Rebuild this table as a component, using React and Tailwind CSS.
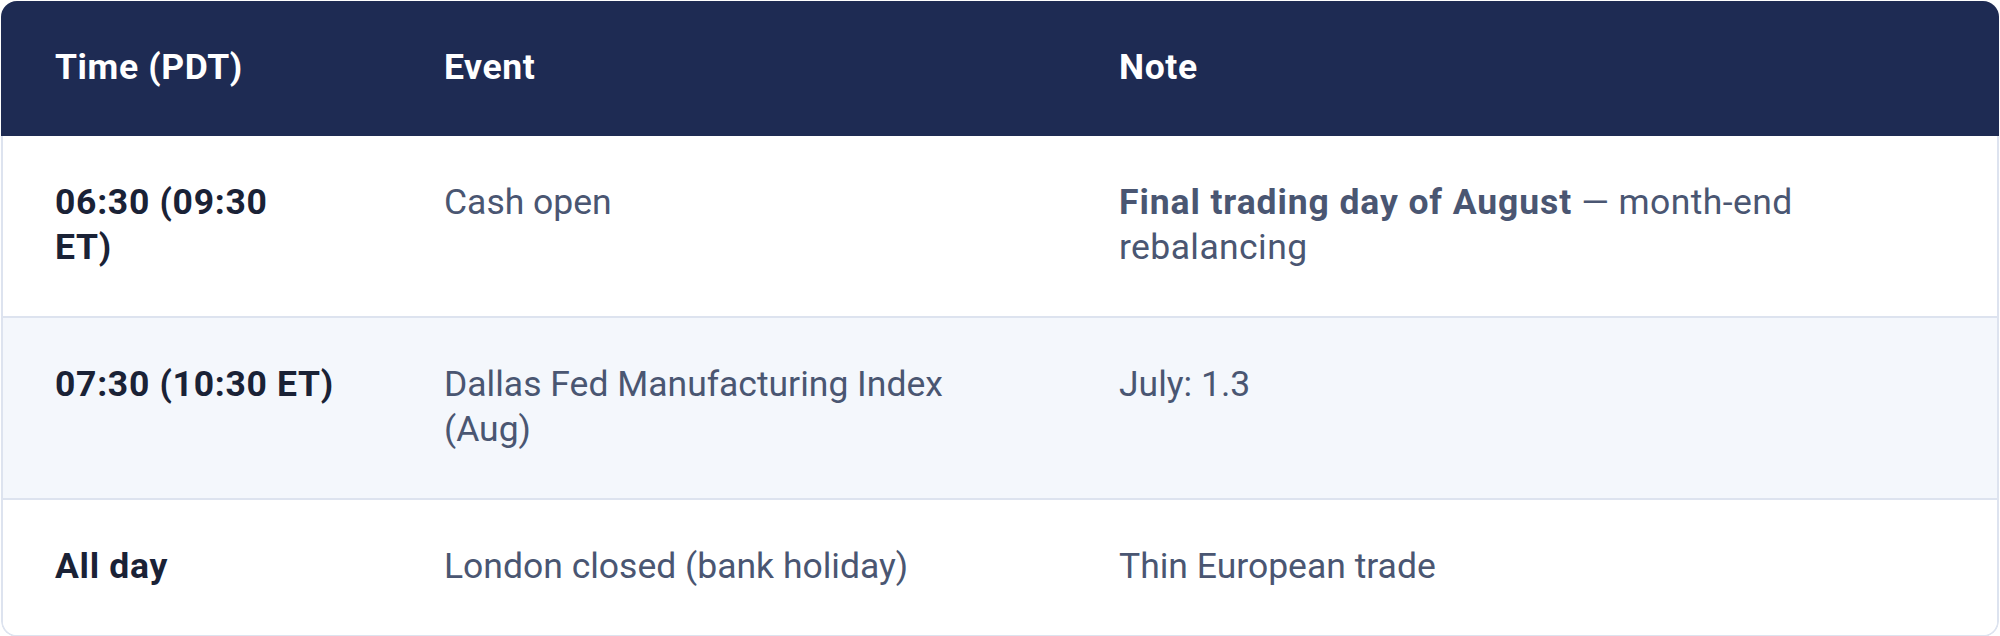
import React from "react";

const rows = [
  {
    time: ["06:30 (09:30", "ET)"],
    event: "Cash open",
    note: (
      <>
        <span className="font-bold tracking-[0.9px]">Final trading day of August</span>
        <span className="tracking-[0.4px]"> — month-end rebalancing</span>
      </>
    ),
    bg: "bg-white",
  },
  {
    time: ["07:30 (10:30 ET)"],
    event: "Dallas Fed Manufacturing Index (Aug)",
    note: "July: 1.3",
    bg: "bg-[#f4f7fc]",
  },
  {
    time: ["All day"],
    event: "London closed (bank holiday)",
    note: "Thin European trade",
    bg: "bg-white",
  },
];

export default function App() {
  return (
    <div
      className="w-[2000px] h-[636px] bg-white p-px"
      style={{ fontFamily: 'Roboto, "Noto Sans", sans-serif' }}
    >
      <div className="rounded-2xl overflow-hidden text-[35.5px] leading-[45px]">
        <div className="grid grid-cols-[389px_675px_1fr] bg-[#1e2b53] text-white font-bold tracking-[0.6px]">
          <div className="pl-[54px] pr-[20px] pt-[44px] pb-[46px]">Time (PDT)</div>
          <div className="pl-[54px] pr-[54px] pt-[44px] pb-[46px]">Event</div>
          <div className="pl-[54px] pr-[54px] pt-[44px] pb-[46px]">Note</div>
        </div>
        <div className="border-x-2 border-b-2 border-[#dde3ef] rounded-b-2xl overflow-hidden">
          {rows.map((r, i) => (
            <div
              key={i}
              className={`grid grid-cols-[387px_675px_1fr] ${r.bg} ${
                i < rows.length - 1 ? "border-b-2 border-[#dde3ef]" : ""
              }`}
            >
              <div className="pl-[52px] pr-[20px] pt-[44px] pb-[46px] font-bold tracking-[0.7px] text-[#1a2236]">
                {r.time.map((t, j) => (
                  <div key={j} className="whitespace-nowrap">
                    {t}
                  </div>
                ))}
              </div>
              <div className="pl-[54px] pr-[54px] pt-[44px] pb-[46px] text-[#4a5672]">
                {r.event}
              </div>
              <div className="pl-[54px] pr-[54px] pt-[44px] pb-[46px] text-[#4a5672]">
                {r.note}
              </div>
            </div>
          ))}
        </div>
      </div>
    </div>
  );
}
